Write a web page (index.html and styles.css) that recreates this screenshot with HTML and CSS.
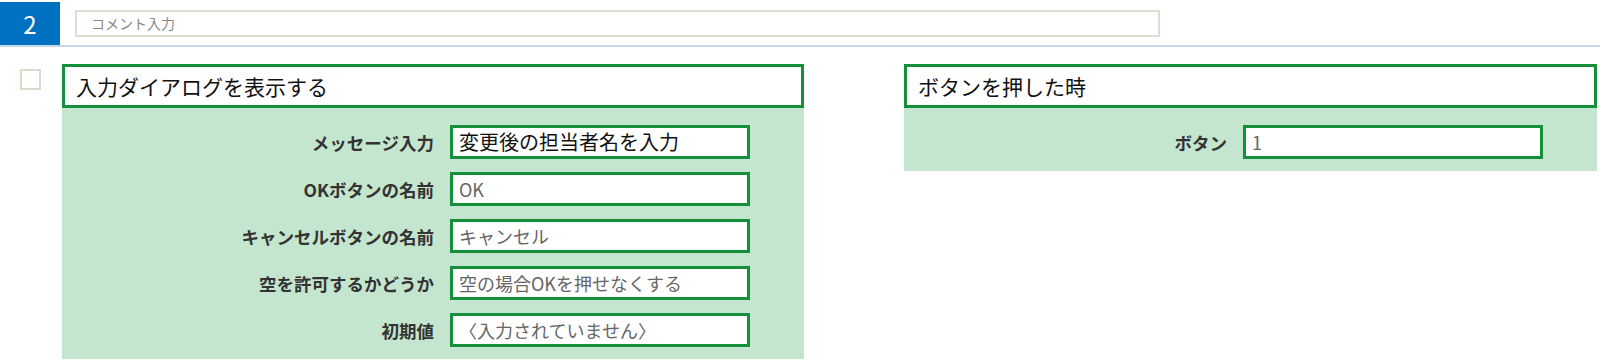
FILE: index.html
```html
<!DOCTYPE html>
<html lang="ja">
<head>
    <meta charset="UTF-8">
    <title>Step 2</title>
    <link rel="stylesheet" href="styles.css">
</head>
<body>
    <div class="bar">
        <div class="step">2</div>
        <div class="comment">コメント入力</div>
    </div>
    <div class="content">
        <div class="check"></div>
        <div class="panel panel-left">
            <div class="panel-head">入力ダイアログを表示する</div>
            <div class="panel-body">
                <div class="row">
                    <span class="label">メッセージ入力</span>
                    <div class="field field-main">変更後の担当者名を入力</div>
                </div>
                <div class="row">
                    <span class="label">OKボタンの名前</span>
                    <div class="field">OK</div>
                </div>
                <div class="row">
                    <span class="label">キャンセルボタンの名前</span>
                    <div class="field">キャンセル</div>
                </div>
                <div class="row">
                    <span class="label">空を許可するかどうか</span>
                    <div class="field">空の場合OKを押せなくする</div>
                </div>
                <div class="row">
                    <span class="label">初期値</span>
                    <div class="field">〈入力されていません〉</div>
                </div>
            </div>
        </div>
        <div class="panel panel-right">
            <div class="panel-head">ボタンを押した時</div>
            <div class="panel-body">
                <div class="row">
                    <span class="label">ボタン</span>
                    <div class="field">1</div>
                </div>
            </div>
        </div>
    </div>
</body>
</html>
```

FILE: styles.css
```css
body {
    margin: 0;
    background-color: #fff;
    font-family: "Noto Sans CJK JP", "Noto Sans", sans-serif;
    color: #111;
}

.bar {
    display: flex;
    height: 45px;
    border-bottom: 2px solid #c5d8ec;
}

.step {
    width: 60px;
    height: 43px;
    margin-top: 2px;
    background-color: #0070c0;
    color: #fff;
    font-size: 24px;
    display: flex;
    align-items: center;
    justify-content: center;
}

.comment {
    box-sizing: border-box;
    width: 1085px;
    height: 27px;
    margin: 10px 0 0 15px;
    border: 2px solid #e3dad0;
    padding-left: 14px;
    font-size: 14px;
    line-height: 23px;
    color: #888;
}

.content {
    display: flex;
    align-items: flex-start;
    padding: 17px 3px 0 20px;
}

.check {
    box-sizing: border-box;
    width: 21px;
    height: 21px;
    margin: 5px 21px 0 0;
    border: 2px solid #e0d7cd;
}

.panel-left {
    width: 742px;
    margin-right: 100px;
}

.panel-right {
    flex: 1;
}

.panel-head {
    box-sizing: border-box;
    height: 44px;
    border: 3px solid #14903a;
    background-color: #fff;
    padding-left: 11px;
    font-size: 21px;
    display: flex;
    align-items: center;
}

.panel-body {
    background-color: #c4e6cf;
    padding: 17px 54px 12px 0;
    display: flex;
    flex-direction: column;
    align-items: flex-end;
    gap: 13px;
}

.row {
    display: flex;
    align-items: center;
    gap: 16px;
}

.label {
    font-size: 17.5px;
    font-weight: bold;
    color: #333;
}

.field {
    box-sizing: border-box;
    width: 300px;
    height: 34px;
    border: 3px solid #14903a;
    background-color: #fff;
    padding: 0 6px;
    font-size: 18px;
    line-height: 28px;
    color: #666;
    white-space: nowrap;
}

.field-main {
    font-size: 20px;
    color: #111;
}
```
